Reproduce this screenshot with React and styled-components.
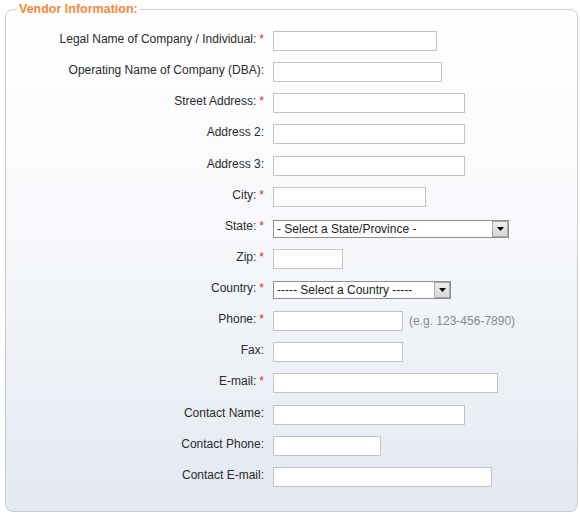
import React from "react";
import styled, { createGlobalStyle } from "styled-components";

const Global = createGlobalStyle`
  html, body { margin: 0; padding: 0; background: #fff; }
  body { font-family: Arial, "Liberation Sans", sans-serif; }
`;

const Page = styled.div`
  padding: 2px 2px 0 5px;
`;

const Fieldset = styled.fieldset`
  margin: 0;
  padding: 15px 0 23px 0;
  height: 510px;
  box-sizing: border-box;
  border: 1px solid #cdcdcd;
  border-radius: 8px;
  background: linear-gradient(#ffffff 0%, #f6f8fb 45%, #e3e9f1 100%);
  min-width: 0;
`;

const Legend = styled.legend`
  margin-left: 11px;
  padding: 0 2px;
  font-size: 12.5px;
  line-height: 14px;
  font-weight: bold;
  color: #f7883b;
`;

const Rows = styled.div`
  display: flex;
  flex-direction: column;
  gap: 11.14px;
`;

const Row = styled.div`
  display: flex;
  align-items: flex-start;
  height: 20px;
`;

const Label = styled.label`
  width: 258px;
  margin-right: 9px;
  padding-top: 1px;
  text-align: right;
  font-size: 12px;
  line-height: 14px;
  color: #2b2b2b;
  white-space: nowrap;
`;

const Req = styled.span`
  color: #c0392b;
  margin-left: 3px;
`;

const Field = styled.div`
  display: flex;
  align-items: center;
  gap: 6px;
`;

const Input = styled.input`
  box-sizing: border-box;
  width: ${(p) => p.$w}px;
  height: 20px;
  margin: 0;
  border: 1px solid #c3c3c3;
  background: #fff;
  font-family: Arial, "Liberation Sans", sans-serif;
  font-size: 12px;
  padding: 1px 3px;
`;

const Hint = styled.span`
  font-size: 12px;
  color: #8a8a8a;
`;

const SelectBox = styled.div`
  box-sizing: border-box;
  display: flex;
  width: ${(p) => p.$w}px;
  height: 18px;
  margin-top: ${(p) => p.$mt}px;
  border: 1px solid #8e8e8e;
  background: #fff;
`;

const NativeSelect = styled.select`
  flex: 1;
  min-width: 0;
  appearance: none;
  -webkit-appearance: none;
  border: none;
  outline: none;
  background: transparent;
  padding: 0 0 0 3px;
  margin: 0;
  font-family: Arial, "Liberation Sans", sans-serif;
  font-size: 12px;
  line-height: 16px;
  color: #222;
`;

const ArrowBtn = styled.div`
  box-sizing: border-box;
  width: 16px;
  height: 16px;
  background: linear-gradient(#ececec, #d8d8d8);
  border: 1px solid #a9a9a9;
  display: flex;
  align-items: center;
  justify-content: center;
`;

const Arrow = () => (
  <svg width="7" height="4" viewBox="0 0 7 4">
    <path d="M0 0H7L3.5 4Z" fill="#000" />
  </svg>
);

const rows = [
  { label: "Legal Name of Company / Individual:", req: true, w: 164 },
  { label: "Operating Name of Company (DBA):", w: 169 },
  { label: "Street Address:", req: true, w: 192 },
  { label: "Address 2:", w: 192 },
  { label: "Address 3:", w: 192 },
  { label: "City:", req: true, w: 153 },
  { label: "State:", req: true, select: "- Select a State/Province -", w: 236, mt: 2 },
  { label: "Zip:", req: true, w: 70 },
  { label: "Country:", req: true, select: "----- Select a Country -----", w: 178, mt: 1 },
  { label: "Phone:", req: true, w: 130, hint: "(e.g. 123-456-7890)" },
  { label: "Fax:", w: 130 },
  { label: "E-mail:", req: true, w: 225 },
  { label: "Contact Name:", w: 192 },
  { label: "Contact Phone:", w: 108 },
  { label: "Contact E-mail:", w: 219 },
];

export default function App() {
  return (
    <Page>
      <Global />
      <Fieldset>
        <Legend>Vendor Information:</Legend>
        <Rows>
          {rows.map((r) => (
            <Row key={r.label}>
              <Label>
                {r.label}
                {r.req && <Req>*</Req>}
              </Label>
              <Field>
                {r.select ? (
                  <SelectBox $w={r.w} $mt={r.mt}>
                    <NativeSelect defaultValue="">
                      <option value="">{r.select}</option>
                    </NativeSelect>
                    <ArrowBtn>
                      <Arrow />
                    </ArrowBtn>
                  </SelectBox>
                ) : (
                  <Input type="text" $w={r.w} />
                )}
                {r.hint && <Hint>{r.hint}</Hint>}
              </Field>
            </Row>
          ))}
        </Rows>
      </Fieldset>
    </Page>
  );
}
